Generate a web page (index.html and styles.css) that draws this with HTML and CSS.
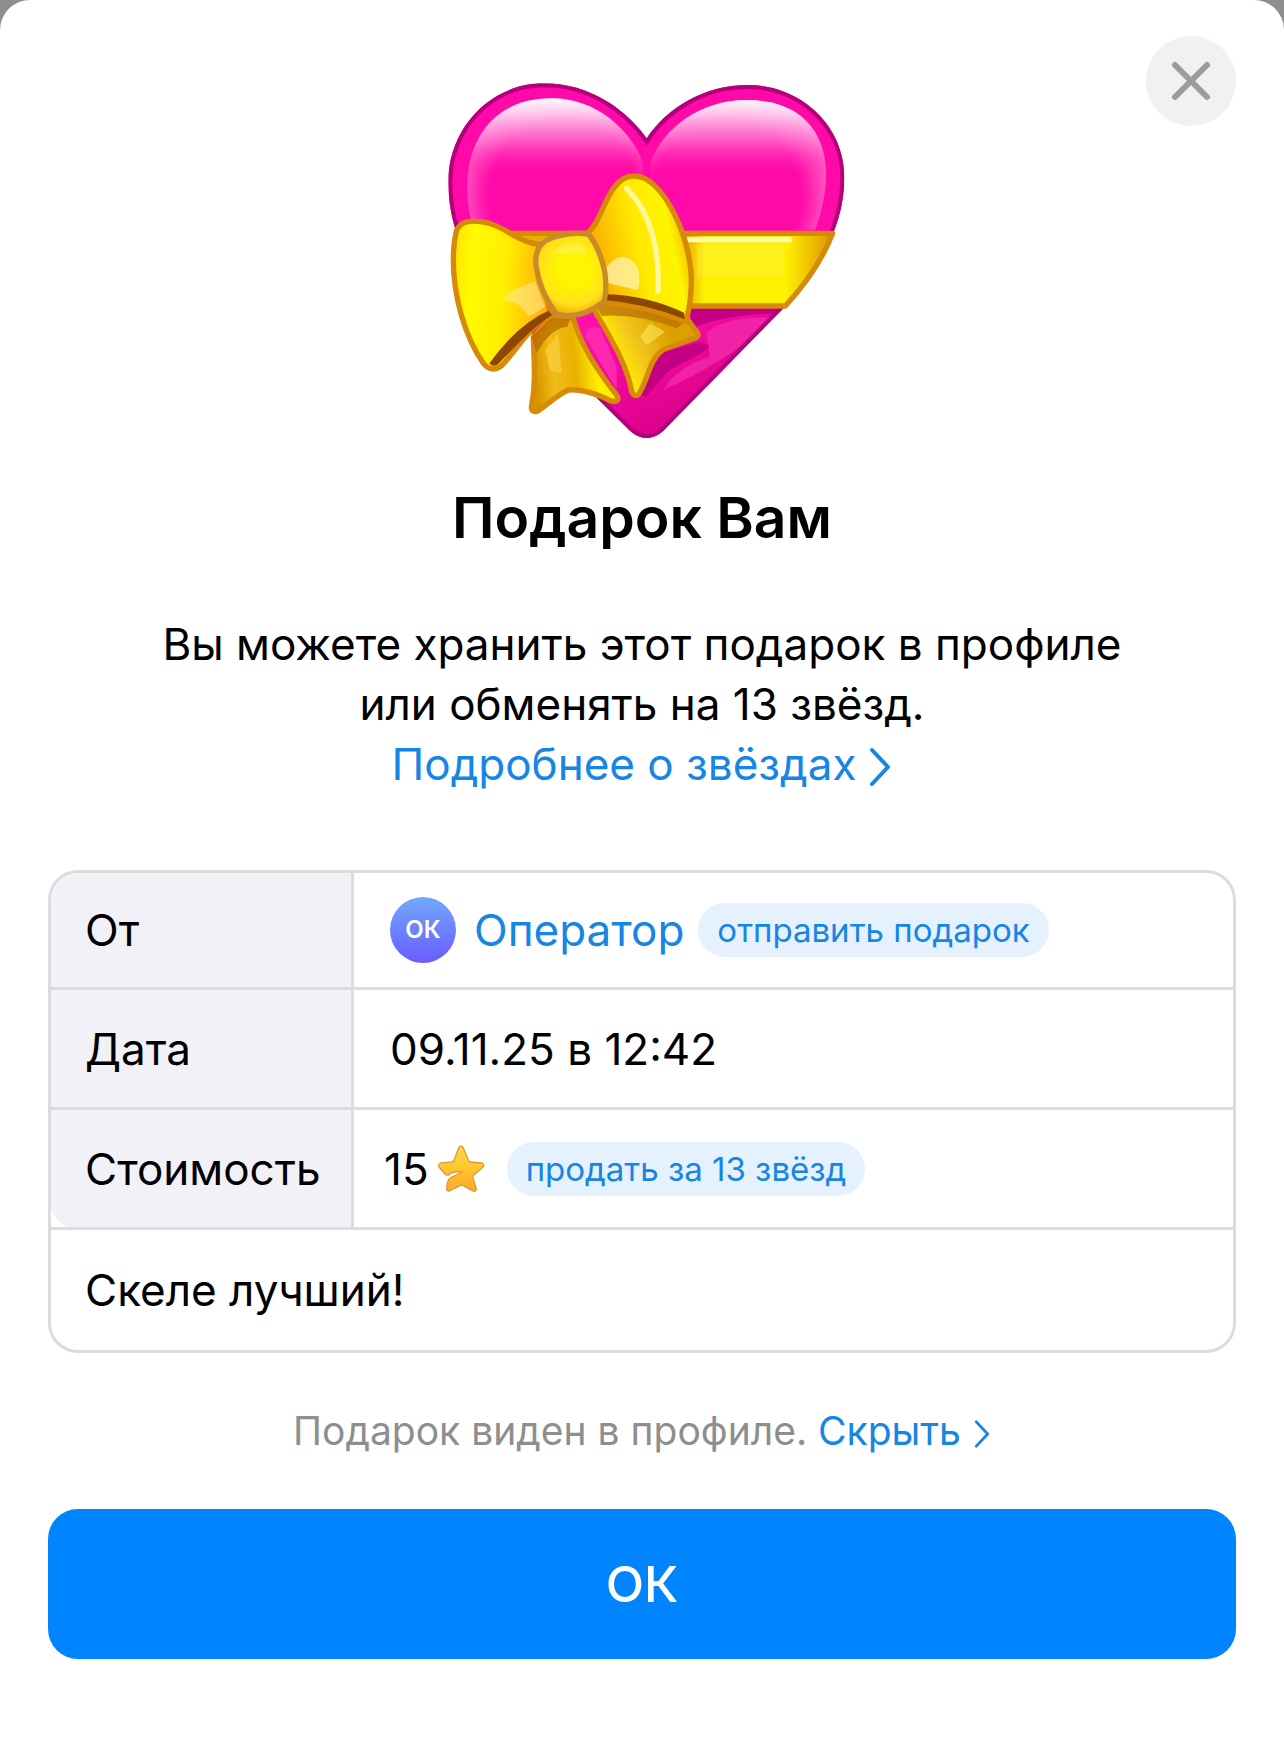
FILE: index.html
```html
<!DOCTYPE html>
<html lang="ru">
<head>
<meta charset="utf-8">
<meta name="viewport" content="width=device-width, initial-scale=1">
<title>Подарок Вам</title>
<link rel="stylesheet" href="styles.css">
</head>
<body>
<main class="sheet">
  <button class="close" type="button" aria-label="Закрыть">
    <svg viewBox="0 0 90 90" aria-hidden="true"><path d="M29 29 61 61M61 29 29 61"/></svg>
  </button>

  <svg class="gift" viewBox="-9 0 1290 1140" role="img" aria-label="Сердце с бантом">
    <defs>
      <linearGradient id="shine" x1="0" y1="85" x2="0" y2="320" gradientUnits="userSpaceOnUse">
        <stop offset="0" stop-color="#fff" stop-opacity=".96"/>
        <stop offset=".2" stop-color="#ffe0f5" stop-opacity=".85"/>
        <stop offset=".55" stop-color="#ff8ad6" stop-opacity=".6"/>
        <stop offset="1" stop-color="#ff0aa8" stop-opacity="0"/>
      </linearGradient>
      <radialGradient id="rimL" cx="400" cy="380" r="320" gradientUnits="userSpaceOnUse">
        <stop offset=".7" stop-color="#ff8ad6" stop-opacity="0"/>
        <stop offset="1" stop-color="#ffa0e0" stop-opacity=".65"/>
      </radialGradient>
      <radialGradient id="rimR" cx="890" cy="380" r="320" gradientUnits="userSpaceOnUse">
        <stop offset=".7" stop-color="#ff8ad6" stop-opacity="0"/>
        <stop offset="1" stop-color="#ffa0e0" stop-opacity=".65"/>
      </radialGradient>
      <linearGradient id="lower" x1="600" y1="720" x2="760" y2="1060" gradientUnits="userSpaceOnUse">
        <stop offset="0" stop-color="#ff0fa8"/>
        <stop offset="1" stop-color="#dc008c"/>
      </linearGradient>
      <linearGradient id="band" x1="770" y1="0" x2="1210" y2="0" gradientUnits="userSpaceOnUse">
        <stop offset="0" stop-color="#eab000"/>
        <stop offset=".12" stop-color="#fff000"/>
        <stop offset=".68" stop-color="#fff000"/>
        <stop offset="1" stop-color="#dc9200"/>
      </linearGradient>
      <linearGradient id="loopL" x1="70" y1="620" x2="350" y2="640" gradientUnits="userSpaceOnUse">
        <stop offset="0" stop-color="#ffe600"/>
        <stop offset=".2" stop-color="#fffb00"/>
        <stop offset=".55" stop-color="#ffee00"/>
        <stop offset="1" stop-color="#ffad0a"/>
      </linearGradient>
      <linearGradient id="loopR" x1="500" y1="560" x2="780" y2="500" gradientUnits="userSpaceOnUse">
        <stop offset="0" stop-color="#f9b000"/>
        <stop offset=".45" stop-color="#ffe900"/>
        <stop offset=".8" stop-color="#fff500"/>
        <stop offset="1" stop-color="#f0b400"/>
      </linearGradient>
      <radialGradient id="knot" cx="430" cy="600" r="130" gradientUnits="userSpaceOnUse">
        <stop offset=".35" stop-color="#fff500"/>
        <stop offset=".8" stop-color="#ffe11a"/>
        <stop offset="1" stop-color="#f3b512"/>
      </radialGradient>
      <linearGradient id="tailL" x1="310" y1="880" x2="500" y2="860" gradientUnits="userSpaceOnUse">
        <stop offset="0" stop-color="#d99200"/>
        <stop offset=".3" stop-color="#f0bd16"/>
        <stop offset=".65" stop-color="#eab100"/>
        <stop offset="1" stop-color="#fff000"/>
      </linearGradient>
      <linearGradient id="tailR" x1="560" y1="870" x2="720" y2="790" gradientUnits="userSpaceOnUse">
        <stop offset="0" stop-color="#ffee00"/>
        <stop offset=".4" stop-color="#f2c51b"/>
        <stop offset="1" stop-color="#dca000"/>
      </linearGradient>
      <clipPath id="heartClip">
        <path d="M650 205C590 120 480 40 342 40C180 40 55 175 55 335C55 500 130 615 240 725L600 1082Q650 1126 700 1082L1060 715C1170 590 1243 470 1243 320C1243 165 1110 45 955 45C820 45 710 115 650 205Z"/>
      </clipPath>
    </defs>

    <g clip-path="url(#heartClip)">
      <path fill="#ff0aa8" d="M0 0H1290V1140H0Z"/>
      <path fill="url(#lower)" d="M200 700H1100V1140H200Z"/>
      <path fill="#c30083" d="M780 700H1080L1060 730Q900 730 785 775ZM690 850 810 815 840 828C800 870 740 875 700 920L650 980 630 975Z"/>
      <path fill="#f233ad" opacity=".65" d="M830 790Q880 740 1030 742Q920 860 700 960Q740 890 840 860Z"/>
      <path fill="#ff35b5" opacity=".7" d="M465 800Q470 760 510 775L560 890V960Z"/>
      <path class="heart-edge" d="M650 205C590 120 480 40 342 40C180 40 55 175 55 335C55 500 130 615 240 725L600 1082Q650 1126 700 1082L1060 715C1170 590 1243 470 1243 320C1243 165 1110 45 955 45C820 45 710 115 650 205Z"/>
    </g>
    <path fill="url(#rimL)" d="M130 480C70 260 160 85 365 85C500 85 600 180 638 275V480Z"/>
    <path fill="url(#shine)" d="M130 480C70 260 160 85 365 85C500 85 600 180 638 275V480Z"/>
    <path fill="url(#rimR)" d="M1155 480C1235 265 1170 90 950 90C810 90 700 175 662 275V480Z"/>
    <path fill="url(#shine)" d="M1155 480C1235 265 1170 90 950 90C810 90 700 175 662 275V480Z"/>

    <path class="outline" fill="url(#band)" d="M230 490H1208Q1165 600 1066 708H700L480 560H340Z"/>
    <path fill="#fffbb0" d="M770 502H1085V517H770Z"/>
    <path fill="#fff36a" opacity=".25" d="M800 525H1060V620H800Z"/>

    <path class="outline" fill="url(#tailL)" d="M310 800L365 740L430 745C450 820 500 900 562 978Q570 1000 540 992C510 975 450 955 415 960C380 975 345 1010 322 1024Q300 1028 305 1005C318 940 312 870 310 800Z"/>
    <path fill="#b66a00" opacity=".75" d="M305 800L365 745 420 748 412 770Q360 775 320 850Z"/>
    <path fill="#ffd64a" opacity=".55" d="M345 840 385 790 395 910 360 900Z"/>
    <path class="outline" fill="url(#tailR)" d="M490 715L530 690L770 745L800 785Q812 800 790 806L705 836C660 860 655 925 628 970Q617 985 606 968C590 880 545 810 490 715Z"/>
    <path fill="#b96f00" opacity=".75" d="M495 705Q640 700 770 750L740 775Q620 730 515 738Z"/>
    <path fill="#fff16c" opacity=".5" d="M630 800 660 760 705 785 650 825Z"/>

    <path class="outline" fill="url(#loopL)" d="M80 480Q95 450 140 454C210 454 265 520 325 522L360 730C300 770 260 840 215 887Q185 910 160 880C105 800 70 680 70 570Q70 520 80 480Z"/>
    <path fill="#8e4700" d="M178 880Q260 765 355 722L366 735C310 770 260 825 205 882Q188 894 178 880Z"/>
    <path fill="#ffe99c" opacity=".55" d="M215 690Q250 650 315 635L345 710Q320 730 295 740Q270 690 215 690Z"/>

    <path class="outline" fill="url(#loopR)" d="M470 490C520 460 530 315 615 318C700 318 795 520 783 660Q780 720 765 755Q660 710 525 698Z"/>
    <path fill="#8e4700" d="M520 672Q650 675 762 728L764 748Q650 700 520 690Z"/>
    <path class="glint" d="M590 355C665 430 690 550 684 665"/>
    <path fill="#fff0a5" opacity=".8" d="M530 590Q580 530 622 590Q635 640 622 660L535 640Z"/>

    <path class="outline knot-edge" fill="url(#knot)" d="M350 510Q410 483 475 492Q510 535 524 605Q532 660 522 695Q450 752 380 732Q325 660 317 575Q317 530 350 510Z"/>
    <path fill="#fff89b" opacity=".3" d="M380 535Q420 510 460 522L470 550H365Z"/>
  </svg>

  <h1 class="title">Подарок Вам</h1>

  <p class="lead">Вы можете хранить этот подарок в профиле<br>или обменять на 13 звёзд.<br>
    <a class="link" href="#stars">Подробнее о звёздах<svg class="chevron" viewBox="0 0 24 42" aria-hidden="true"><path d="M4 4 20 21 4 38"/></svg></a>
  </p>

  <div class="card">
    <table class="details">
      <tr class="row-from">
        <th scope="row">От</th>
        <td>
          <div class="value">
            <span class="avatar">ОК</span>
            <a class="name" href="#operator">Оператор</a>
            <button class="pill" type="button">отправить подарок</button>
          </div>
        </td>
      </tr>
      <tr>
        <th scope="row">Дата</th>
        <td>09.11.25 в 12:42</td>
      </tr>
      <tr>
        <th scope="row" class="last-label">Стоимость</th>
        <td class="cost">
          <div class="value">
            <span>15</span>
            <svg class="star" viewBox="0 0 144 144" role="img" aria-label="звёзд">
              <defs>
                <linearGradient id="gold" x1="0" y1="0" x2="0" y2="1">
                  <stop offset="0" stop-color="#ffd94a"/>
                  <stop offset=".5" stop-color="#ffc62d"/>
                  <stop offset="1" stop-color="#ffa82a"/>
                </linearGradient>
              </defs>
              <path fill="url(#gold)" d="M66 7Q72 0 78 7L94 46Q96 51 101 51L135 54Q144 58 138 66L110 91Q107 95 108 99L118 132Q117 142 107 138L79 122Q74 119 69 122L37 138Q28 139 29 129L32 110Q34 101 43 97L77 81Q50 78 38 88Q30 93 24 87L6 66Q2 58 11 54L44 51Q49 50 51 46Z"/>
            </svg>
            <button class="pill pill-sell" type="button">продать за 13 звёзд</button>
          </div>
        </td>
      </tr>
      <tr class="row-message">
        <td colspan="2">Скеле лучший!</td>
      </tr>
    </table>
  </div>

  <p class="note">Подарок виден в профиле. <a class="link" href="#hide">Скрыть<svg class="chevron" viewBox="0 0 24 42" aria-hidden="true"><path d="M4 4 20 21 4 38"/></svg></a></p>

  <button class="confirm" type="button">ОК</button>
</main>
</body>
</html>
```
FILE: styles.css
```css
* {
  box-sizing: border-box;
}

body {
  margin: 0;
  background: #8e8e91;
  color: #000;
  font-family: Inter, "Liberation Sans", sans-serif;
  font-size: 44px;
  line-height: 60px;
}

button {
  border: 0;
  padding: 0;
  font: inherit;
  cursor: pointer;
}

a {
  color: #1585e6;
  text-decoration: none;
}

.sheet {
  position: relative;
  display: flex;
  flex-direction: column;
  min-height: 100vh;
  padding: 70px 48px 96px;
  border-radius: 30px 30px 0 0;
  background: #fff;
}

.close {
  position: absolute;
  top: 36px;
  right: 48px;
  width: 90px;
  height: 90px;
  border-radius: 50%;
  background: #f1f1f1;
}

.close svg {
  display: block;
  fill: none;
  stroke: #9c9c9c;
  stroke-width: 6;
  stroke-linecap: round;
}

.gift {
  align-self: center;
  width: 430px;
  height: 380px;
}

.heart-edge {
  fill: none;
  stroke: #b4007c;
  stroke-width: 24;
}

.outline {
  stroke: #d68a08;
  stroke-width: 16;
  stroke-linejoin: round;
}

.knot-edge {
  stroke: #c98a28;
}

.glint {
  fill: none;
  stroke: #fff799;
  stroke-width: 16;
  stroke-linecap: round;
}

.title {
  margin: 32px 0 60px;
  font-size: 57px;
  font-weight: 600;
  line-height: 72px;
  text-align: center;
}

.lead {
  margin: 0 0 76px;
  text-align: center;
}

.chevron {
  width: 24px;
  height: 42px;
  margin-left: 12px;
  vertical-align: -8px;
  fill: none;
  stroke: currentColor;
  stroke-width: 4;
  stroke-linecap: round;
  stroke-linejoin: round;
}

.card {
  overflow: hidden;
  border: 3px solid #dcdcde;
  border-radius: 30px;
}

.details {
  width: 100%;
  border-spacing: 0;
  table-layout: fixed;
}

.details th,
.details td {
  height: 120px;
  padding: 0 34px;
  border-bottom: 3px solid #dcdcde;
  font-weight: 400;
  text-align: left;
}

.details th {
  width: 300px;
  background: #f2f1f8;
}

.details th + td {
  padding-left: 36px;
  border-left: 3px solid #dcdcde;
}

.details th + .cost {
  padding-left: 30px;
}

.details .row-from > * {
  height: 117px;
}

.details .row-message td {
  border-bottom: 0;
}

.details .last-label {
  background: radial-gradient(circle at 24px calc(100% - 24px), #f2f1f8 24px, #fff 25px) 0 100% / 24px 24px no-repeat, #f2f1f8;
}

.value {
  display: flex;
  align-items: center;
}

.avatar {
  width: 66px;
  height: 66px;
  margin-right: 18px;
  border-radius: 50%;
  background: linear-gradient(#72a8fc, #6a5cff);
  color: #fff;
  font-size: 24px;
  font-weight: 600;
  line-height: 66px;
  text-align: center;
}

.pill {
  height: 54px;
  margin-left: 14px;
  padding: 0 19px;
  border-radius: 27px;
  background: #e5f1fc;
  color: #1585e6;
  font-size: 33px;
  line-height: 54px;
}

.star {
  width: 48px;
  height: 48px;
  margin-left: 8px;
  stroke: #e0993a;
  stroke-width: 4;
  stroke-linejoin: round;
}

.pill-sell {
  margin-left: 22px;
}

.note {
  margin: 48px 0;
  color: #8e8e8e;
  font-size: 39px;
  text-align: center;
}

.note .chevron {
  width: 18px;
  height: 30px;
  vertical-align: -4px;
}

.confirm {
  height: 150px;
  border-radius: 30px;
  background: #0085ff;
  color: #fff;
  font-size: 50px;
  font-weight: 500;
}
```
